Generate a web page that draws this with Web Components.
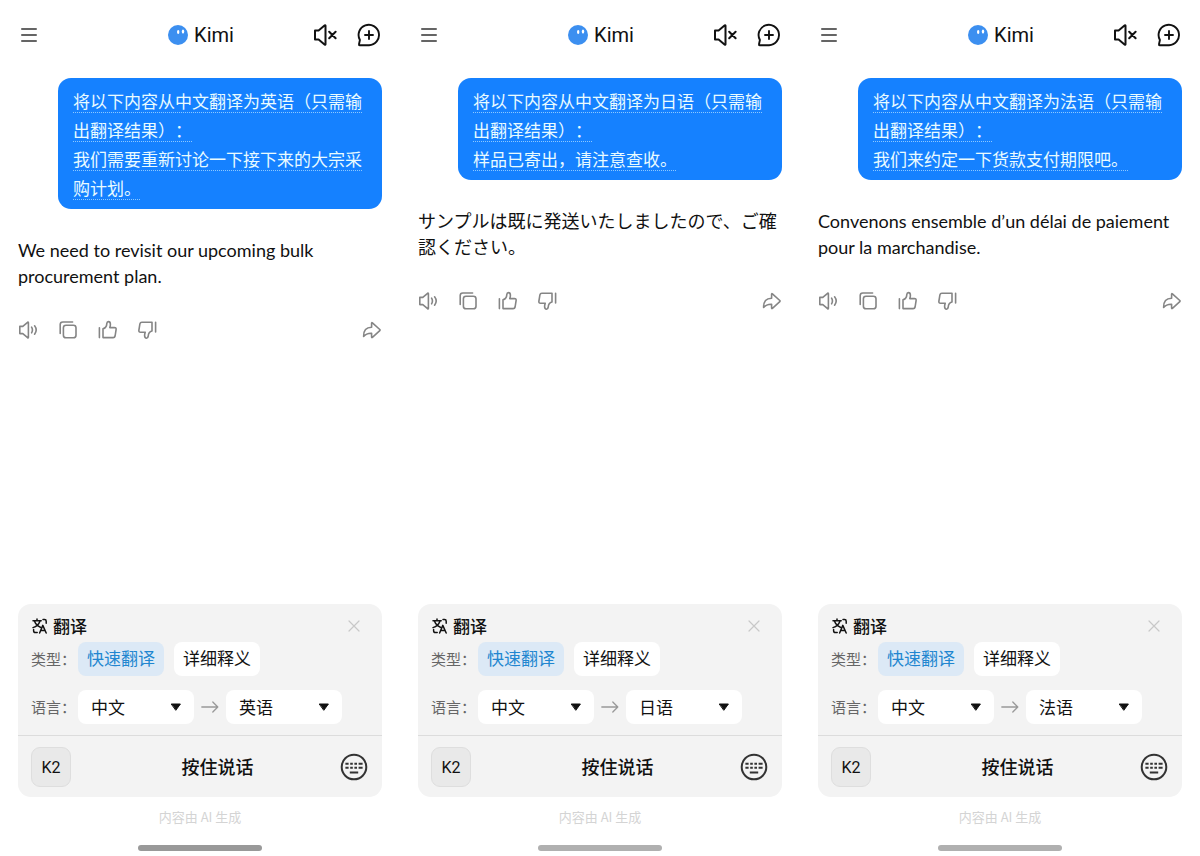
<!DOCTYPE html>
<html lang="zh-CN">
<head>
<meta charset="utf-8">
<meta name="viewport" content="width=device-width, initial-scale=1">
<title>Kimi</title>
<style>
    body {
        margin: 0;
        min-height: 100vh;
        display: grid;
        grid-template-columns: repeat(3, minmax(0, 1fr));
        background: #fff;
        color: #111;
        font-family: "Noto Sans CJK SC", "Noto Sans", sans-serif;
        font-size: 17px;
    }
</style>
</head>
<body>
    <chat-screen>
        <chat-bubble slot="question">将以下内容从中文翻译为英语（只需输出翻译结果）：<br>我们需要重新讨论一下接下来的大宗采购计划。</chat-bubble>
        <chat-answer slot="answer" lang="en">We need to revisit our upcoming bulk procurement plan.</chat-answer>
        <translate-panel slot="panel" target="英语"></translate-panel>
    </chat-screen>
    <chat-screen style="--home-bar: #b0b0b0">
        <chat-bubble slot="question">将以下内容从中文翻译为日语（只需输出翻译结果）：<br>样品已寄出，请注意查收。</chat-bubble>
        <chat-answer slot="answer" lang="ja">サンプルは既に発送いたしましたので、ご確認ください。</chat-answer>
        <translate-panel slot="panel" target="日语"></translate-panel>
    </chat-screen>
    <chat-screen style="--home-bar: #b0b0b0">
        <chat-bubble slot="question">将以下内容从中文翻译为法语（只需输出翻译结果）：<br>我们来约定一下货款支付期限吧。</chat-bubble>
        <chat-answer slot="answer" lang="fr">Convenons ensemble d’un délai de paiement pour la marchandise.</chat-answer>
        <translate-panel slot="panel" target="法语"></translate-panel>
    </chat-screen>

<script>
// Every icon is drawn in its own viewBox, one unit per pixel
const ICONS = {
    menu: [16, 16, '<path d="M0.8 2h14.4M0.8 8h14.4M0.8 14h14.4" stroke="#333" stroke-width="1.6"/>'],
    avatar: [20, 20, '<circle cx="10" cy="10" r="10" fill="#3c8ff0" stroke="none"/><ellipse cx="10.2" cy="7" rx="1.2" ry="2.1" fill="#fff" stroke="none"/><ellipse cx="15" cy="6.600" rx="1.200" ry="2.100" fill="#fff" stroke="none"/>'],
    muted: [24, 24, '<path d="M2 7.400h3.600L11.800 2.300q.7-.4.7.5v18.400q0 .9-.7.5L5.600 16.600H2zM16.200 8.800l6.400 6.400M22.600 8.800l-6.400 6.400" stroke-width="2"/>'],
    newchat: [24, 24, '<path d="M2.900 17A10.200 10.200 0 1 1 12 22.200H2.700q-1 0-.7-.9l.9-4.300M12 8v8M8 12h8" stroke-width="1.900"/>'],
    speak: [20, 20, '<path d="M1.800 6.400h3L9.600 2.300q.8-.5.8.5v14.400q0 1-.8.5L4.800 13.600h-3zM13.600 7.200q1.700 2.800 0 5.600M16.600 5.800q3.200 4.200 0 8.400"/>'],
    copy: [20, 20, '<rect x="5.400" y="5.200" width="12.600" height="12.600" rx="2.600"/><path d="M2.200 13.400V4.600q0-2.600 2.600-2.600h9.800"/>'],
    like: [20, 20, '<path d="M1.400 7.800v9.800M5 17.600V8.800q3.600-1 3.800-5.200Q9 1.600 10.400 1.600q2 0 2 2.600 0 1.600-.6 3.400h4.600q2 0 1.700 2l-1 6.400q-.3 1.600-2 1.600z"/>'],
    dislike: [20, 20, '<path d="M17.600 2.200v9.800M14 2.200v8.800q-3.600 1-3.800 5.200Q10 18.200 8.600 18.200q-2 0-2-2.600 0-1.600.6-3.400H2.600q-2 0-1.700-2l1-6.400q.3-1.600 2-1.600z"/>'],
    share: [20, 20, '<path d="M1.600 16.400Q1.400 7.200 9.600 7.200V3.200q0-1 .8-.3l7.400 6.600q.6.600 0 1.200l-7.400 6.600q-.8.700-.8-.3v-3.800Q4.400 13 1.600 16.400z"/>'],
    translate: [16, 16, '<path d="M1 2.800h8.200M5 1v1.800M2.400 3q1.800 4.600 6 6.200M8 3Q6.400 8 1 9.600M7.600 15l3.200-7.600L14.200 15M8.800 12.600h4M11 1.600h1.600q1.600 0 1.600 1.600v2M1.600 11.600v1.200q0 1.800 1.800 1.800h1.800" stroke-width="1.500"/>'],
    close: [12, 12, '<path d="M1 1l10 10M11 1L1 11" stroke-width="1.200"/>'],
    arrow: [18, 12, '<path d="M0.800 6h16M11.800 1l5 5-5 5" stroke-width="1.300"/>'],
    caret: [10, 8, '<path d="M.6 1h8.800L5 7z" fill="currentColor" stroke-width="1"/>'],
    keyboard: [28, 28, '<circle cx="14" cy="14" r="12.300" stroke-width="2"/><path d="M5.400 10.800h3.200M10.200 10.800h2.600M14.400 10.800h2.600M18.600 10.800h4M5.400 14.800h3.200M10.200 14.800h2.600M14.400 14.800h2.600M18.600 14.800h4M9.800 19.400h8.400" stroke-width="2" stroke-linecap="butt"/>']
};

class KimiIcon extends HTMLElement {
    constructor() {
        super();
        this.attachShadow({ mode: 'open' });
    }

    connectedCallback() {
        const [width, height, shapes] = ICONS[this.getAttribute('name')];
        this.shadowRoot.innerHTML = `
            <style>
                :host {
                    display: block;
                    flex: none;
                }

                svg {
                    display: block;
                    fill: none;
                    stroke: currentColor;
                    stroke-width: 1.6;
                    stroke-linecap: round;
                    stroke-linejoin: round;
                }
            </style>
            <svg width="${width}" height="${height}" viewBox="0 0 ${width} ${height}" aria-hidden="true">${shapes}</svg>
        `;
    }
}

class ChatHeader extends HTMLElement {
    constructor() {
        super();
        this.attachShadow({ mode: 'open' });
    }

    connectedCallback() {
        this.shadowRoot.innerHTML = `
            <style>
                :host {
                    display: block;
                    padding: 20px 0 28px;
                }

                header {
                    display: grid;
                    grid-template-columns: 1fr auto 1fr;
                    align-items: center;
                    height: 30px;
                    padding: 0 19px 0 21px;
                }

                .name {
                    display: flex;
                    align-items: center;
                    gap: 6px;
                    margin: 0;
                    font-family: Roboto, sans-serif;
                    font-size: 20px;
                    font-weight: 400;
                    line-height: 30px;
                }

                .tools {
                    display: flex;
                    justify-content: flex-end;
                    gap: 20px;
                }

                button {
                    justify-self: start;
                    padding: 0;
                    border: 0;
                    background: none;
                    color: #111;
                    cursor: pointer;
                }
            </style>
            <header>
                <button aria-label="菜单"><kimi-icon name="menu"></kimi-icon></button>
                <h1 class="name"><kimi-icon name="avatar"></kimi-icon>Kimi</h1>
                <div class="tools">
                    <button aria-label="静音"><kimi-icon name="muted"></kimi-icon></button>
                    <button aria-label="新会话"><kimi-icon name="newchat"></kimi-icon></button>
                </div>
            </header>
        `;
    }
}

class ChatBubble extends HTMLElement {
    constructor() {
        super();
        this.attachShadow({ mode: 'open' });
    }

    connectedCallback() {
        this.shadowRoot.innerHTML = `
            <style>
                :host {
                    display: block;
                    margin-left: 40px;
                    padding: 8px 15px 7px;
                    border-radius: 13px;
                    background: #1581ff;
                    color: #e9fbff;
                    line-height: 29px;
                    text-spacing-trim: space-all;
                }

                span {
                    text-decoration: underline dotted 1px #8cc8ff;
                    text-underline-offset: 4px;
                    text-decoration-skip-ink: none;
                }
            </style>
            <span><slot></slot></span>
        `;
    }
}

class ChatAnswer extends HTMLElement {
    constructor() {
        super();
        this.attachShadow({ mode: 'open' });
    }

    connectedCallback() {
        this.shadowRoot.innerHTML = `
            <style>
                :host {
                    display: block;
                    margin-top: 28px;
                    font-family: Lato, "Noto Sans CJK JP", sans-serif;
                    font-size: 18px;
                    line-height: 26px;
                }

                p {
                    margin: 0 0 31px;
                }

                .actions {
                    display: flex;
                    gap: 20px;
                }

                button {
                    padding: 0;
                    border: 0;
                    background: none;
                    color: #858585;
                    cursor: pointer;
                }

                .share {
                    margin-left: auto;
                }
            </style>
            <p><slot></slot></p>
            <div class="actions">
                <button aria-label="朗读"><kimi-icon name="speak"></kimi-icon></button>
                <button aria-label="复制"><kimi-icon name="copy"></kimi-icon></button>
                <button aria-label="喜欢"><kimi-icon name="like"></kimi-icon></button>
                <button aria-label="不喜欢"><kimi-icon name="dislike"></kimi-icon></button>
                <button class="share" aria-label="分享"><kimi-icon name="share"></kimi-icon></button>
            </div>
        `;
    }
}

class TranslatePanel extends HTMLElement {
    constructor() {
        super();
        this.attachShadow({ mode: 'open' });
    }

    connectedCallback() {
        const target = this.getAttribute('target');
        this.shadowRoot.innerHTML = `
            <style>
                :host {
                    display: block;
                    border-radius: 13px;
                    background: #f3f3f3;
                }

                button, select {
                    margin: 0;
                    border: 0;
                    background: none;
                    color: inherit;
                    font: inherit;
                    cursor: pointer;
                }

                .options {
                    display: grid;
                    padding: 8px 13px 11px;
                    border-bottom: 1px solid #dcdcdc;
                }

                .title, .row, .voice {
                    display: flex;
                    align-items: center;
                }

                .title {
                    justify-content: space-between;
                    height: 28px;
                    margin-bottom: 2px;
                    padding: 0 9px 0 1px;
                }

                h2 {
                    display: flex;
                    align-items: center;
                    gap: 5px;
                    margin: 0;
                    font-size: 17px;
                    font-weight: 500;
                    line-height: 28px;
                }

                .close {
                    padding: 0;
                    color: #c8c8c8;
                }

                .row {
                    height: 34px;
                    margin-bottom: 14px;
                }

                .row:last-child {
                    margin-bottom: 0;
                }

                .caption {
                    width: 47px;
                    color: #666;
                    font-size: 15px;
                    line-height: 34px;
                }

                .type {
                    height: 34px;
                    margin-right: 10px;
                    padding: 0 9px 2px;
                    border-radius: 8px;
                    background: #fff;
                    line-height: 32px;
                }

                .type[aria-pressed="true"] {
                    background: #dce9f6;
                    color: #2186d0;
                }

                .picker {
                    display: grid;
                    align-items: center;
                    width: 116px;
                    border-radius: 8px;
                    background: #fff;
                }

                .picker > * {
                    grid-area: 1 / 1;
                }

                .picker kimi-icon {
                    justify-self: end;
                    margin-right: 13px;
                    pointer-events: none;
                }

                select {
                    appearance: none;
                    width: 100%;
                    height: 34px;
                    padding: 0 13px 2px;
                }

                .arrow {
                    margin: 0 7px;
                    color: #999;
                }

                .voice {
                    justify-content: space-between;
                    padding: 11px 14px 10px 13px;
                }

                .model {
                    width: 40px;
                    height: 40px;
                    padding: 0;
                    border: 1px solid #dedede;
                    border-radius: 9px;
                    background: #e9e9e9;
                    font-family: Roboto, sans-serif;
                    font-size: 16px;
                }

                .talk {
                    flex: 1;
                    padding: 0 0 2px 24px;
                    font-size: 18px;
                    font-weight: 500;
                    line-height: 38px;
                }

                .keyboard {
                    padding: 0;
                    color: #333;
                }
            </style>
            <section class="options">
                <div class="title">
                    <h2><kimi-icon name="translate"></kimi-icon>翻译</h2>
                    <button class="close" aria-label="关闭"><kimi-icon name="close"></kimi-icon></button>
                </div>
                <div class="row">
                    <span class="caption">类型：</span>
                    <button class="type" aria-pressed="true">快速翻译</button>
                    <button class="type" aria-pressed="false">详细释义</button>
                </div>
                <div class="row">
                    <label class="caption" for="source">语言：</label>
                    <div class="picker">
                        <select id="source"><option>中文</option></select>
                        <kimi-icon name="caret"></kimi-icon>
                    </div>
                    <kimi-icon class="arrow" name="arrow"></kimi-icon>
                    <div class="picker">
                        <select aria-label="目标语言"><option>${target}</option></select>
                        <kimi-icon name="caret"></kimi-icon>
                    </div>
                </div>
            </section>
            <div class="voice">
                <button class="model">K2</button>
                <button class="talk">按住说话</button>
                <button class="keyboard" aria-label="键盘"><kimi-icon name="keyboard"></kimi-icon></button>
            </div>
        `;

        this.setupEventListeners();
    }

    setupEventListeners() {
        const types = this.shadowRoot.querySelectorAll('.type');

        types.forEach((type) => {
            type.addEventListener('click', () => {
                types.forEach((other) => other.setAttribute('aria-pressed', other === type));
            });
        });
    }
}

class ChatScreen extends HTMLElement {
    constructor() {
        super();
        this.attachShadow({ mode: 'open' });
    }

    connectedCallback() {
        this.shadowRoot.innerHTML = `
            <style>
                :host {
                    display: flex;
                    flex-direction: column;
                }

                main {
                    flex: 1;
                    padding: 0 18px 24px;
                }

                footer {
                    padding: 0 18px 5px;
                }

                .note {
                    margin: 10px 0 18px;
                    color: #d4d4d4;
                    font-size: 13px;
                    line-height: 20px;
                    text-align: center;
                }

                .home {
                    width: 34%;
                    height: 6px;
                    margin: 0 auto;
                    border-radius: 3px;
                    background: var(--home-bar, #999);
                }
            </style>
            <chat-header></chat-header>
            <main>
                <slot name="question"></slot>
                <slot name="answer"></slot>
            </main>
            <footer>
                <slot name="panel"></slot>
                <p class="note">内容由 AI 生成</p>
                <div class="home"></div>
            </footer>
        `;
    }
}

customElements.define('kimi-icon', KimiIcon);
customElements.define('chat-header', ChatHeader);
customElements.define('chat-bubble', ChatBubble);
customElements.define('chat-answer', ChatAnswer);
customElements.define('translate-panel', TranslatePanel);
customElements.define('chat-screen', ChatScreen);
</script>
</body>
</html>
